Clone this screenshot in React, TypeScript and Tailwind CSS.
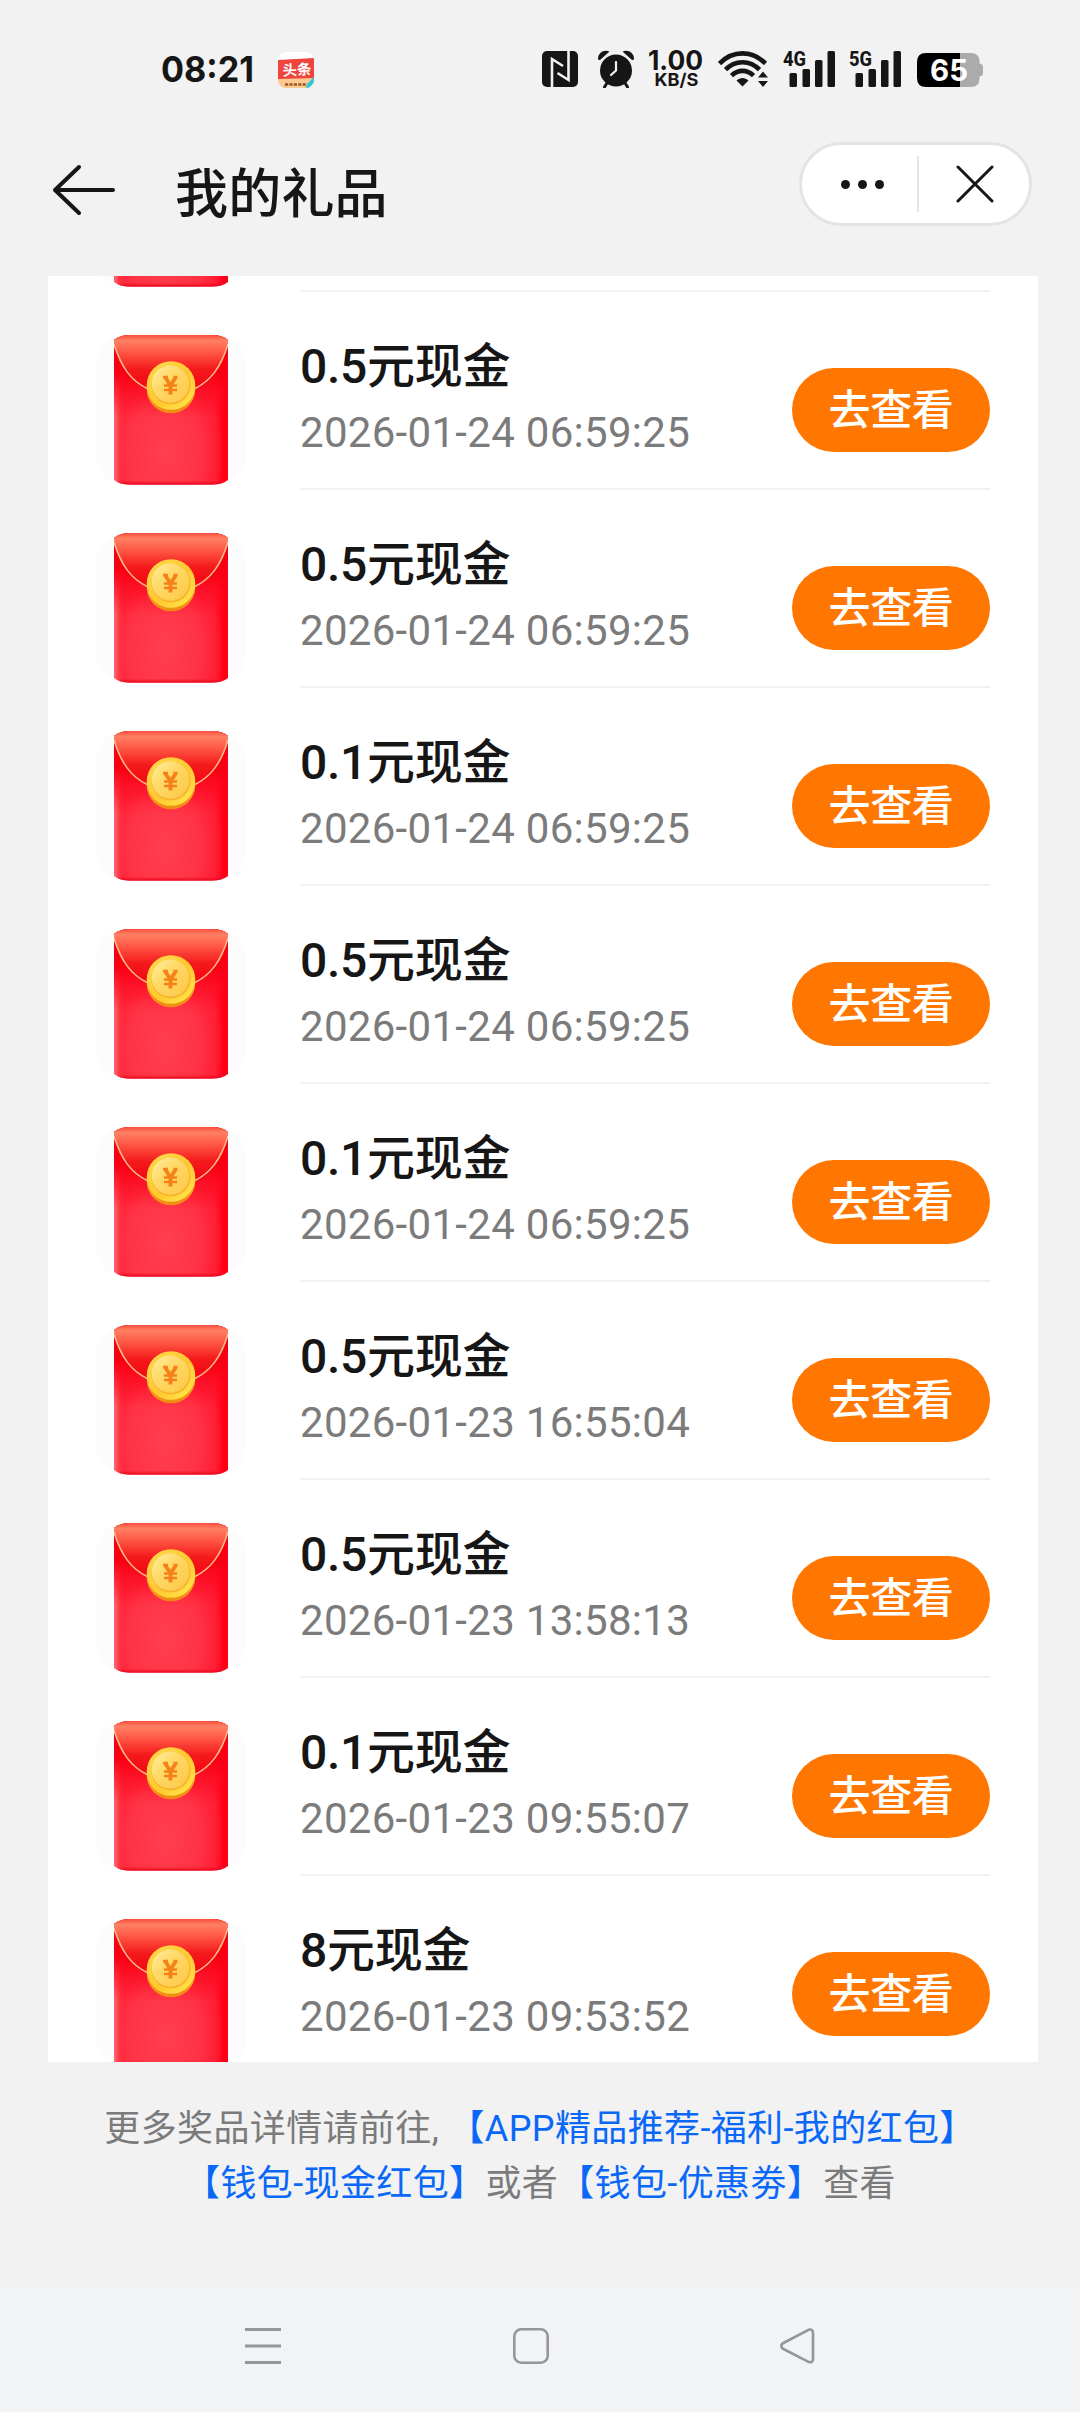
type Gift = {
  title: string;
  time: string;
};

const gifts: Gift[] = [
  { title: "0.5元现金", time: "2026-01-24 06:59:25" },
  { title: "0.5元现金", time: "2026-01-24 06:59:25" },
  { title: "0.1元现金", time: "2026-01-24 06:59:25" },
  { title: "0.5元现金", time: "2026-01-24 06:59:25" },
  { title: "0.1元现金", time: "2026-01-24 06:59:25" },
  { title: "0.5元现金", time: "2026-01-23 16:55:04" },
  { title: "0.5元现金", time: "2026-01-23 13:58:13" },
  { title: "0.1元现金", time: "2026-01-23 09:55:07" },
  { title: "8元现金", time: "2026-01-23 09:53:52" },
];

function ToutiaoIcon() {
  return (
    <svg className="ml-[25px] mt-[52px] h-9 w-9" viewBox="0 0 36 36">
      <defs>
        <clipPath id="app-clip">
          <rect width="36" height="36" rx="8" />
        </clipPath>
      </defs>
      <g clipPath="url(#app-clip)">
        <rect width="36" height="36" fill="#fff" />
        <path d="M0 8 36 6V28H0Z" fill="#f0443e" />
        <path d="M0 27 36 26V36H0Z" fill="#fdc98f" />
        <path d="M29 32 36 25V31L31 36H28Z" fill="#2fc8d8" />
      </g>
      <text
        x="4.5"
        y="23"
        fontSize="14.5"
        fontWeight="700"
        fill="#fff"
        transform="rotate(-3 18 18)"
        className="font-['Noto_Sans_CJK_SC',sans-serif]"
      >
        头条
      </text>
      <path d="M7 32.5h21" stroke="#9c5a2c" strokeWidth="2.6" strokeDasharray="3.2 1.2" />
    </svg>
  );
}

function NfcIcon() {
  return (
    <svg className="h-9 w-9" viewBox="0 0 36 36">
      <rect width="36" height="36" rx="5" fill="#161616" />
      <g fill="none" stroke="#f2f2f2" strokeWidth="2.6">
        <path d="M10 36V8L21 15" />
        <path d="M26.500 0V29L15.500 22" />
      </g>
    </svg>
  );
}

function AlarmIcon() {
  return (
    <svg className="h-[38px] w-9" viewBox="0 0 36 38">
      <g fill="#161616">
        <circle cx="18" cy="20.500" r="16" />
        <path d="M0 8.500C0 3 6 -1 11.500 1.500L2 10C.6 10 0 9.500 0 8.500Z" />
        <path d="M36 8.500C36 3 30 -1 24.500 1.500L34 10C35.400 10 36 9.500 36 8.500Z" />
      </g>
      <path d="M9 33 6.500 37M27 33l2.500 4" stroke="#161616" strokeWidth="3" strokeLinecap="round" />
      <path d="M18 12v8.500l-5 4.500" fill="none" stroke="#f2f2f2" strokeWidth="2.200" strokeLinecap="round" />
    </svg>
  );
}

function NetSpeed() {
  return (
    <svg className="h-[38px] w-[54px] overflow-visible" viewBox="0 0 54 38" fill="#161616">
      <text x="-1" y="20" fontSize="26.5" fontWeight="700" textLength="55" lengthAdjust="spacingAndGlyphs" className="font-['Inter',sans-serif]">
        1.00
      </text>
      <text x="5.500" y="36" fontSize="17.500" fontWeight="700" textLength="44" lengthAdjust="spacingAndGlyphs" className="font-['Inter',sans-serif]">
        KB/S
      </text>
    </svg>
  );
}

function WifiIcon() {
  return (
    <svg className="h-9 w-[51px]" viewBox="0 0 51 36">
      <g fill="none" stroke="#161616" strokeWidth="4.6">
        <path d="M1.500 12.500C15-1 34-1 47.500 12.500" />
        <path d="M7.500 18.700C17 8.700 32 8.700 41.500 18.700" />
        <path d="M13.500 24.700C20 18.200 29 18.200 35.500 24.700" />
      </g>
      <path d="M18.500 29.500C22 26 27 26 30.500 29.500L24.500 35.500Z" fill="#161616" />
      <path d="M40 26.500 45 20.500 50 26.500ZM40 30 45 36 50 30Z" fill="#161616" />
    </svg>
  );
}

function SignalIcon({ label }: { label: string }) {
  return (
    <svg className="h-[38px] w-[52px] overflow-visible" viewBox="0 0 52 38" fill="#161616">
      <text x="0" y="16" fontSize="21" fontWeight="800" textLength="23" lengthAdjust="spacingAndGlyphs" className="font-['Roboto',sans-serif]">
        {label}
      </text>
      <rect x="6.500" y="23" width="7.500" height="14" rx="1.500" />
      <rect x="19.500" y="19" width="7.500" height="18" rx="1.500" />
      <rect x="32" y="10" width="7.500" height="27" rx="1.500" />
      <rect x="44.500" y="1" width="7.500" height="36" rx="1.500" />
    </svg>
  );
}

function BatteryIcon() {
  return (
    <svg className="h-[34px] w-[66px] overflow-visible" viewBox="0 0 66 34">
      <path d="M43 0H54Q62 0 62.500 8V10.500Q66 11 66 14V20Q66 23 62.500 23.500V26Q62 34 54 34H43Z" fill="#ababab" />
      <path d="M43 0H9Q0 0 0 9V25Q0 34 9 34H43Z" fill="#000" />
      <text x="13" y="28" fontSize="30" fontWeight="700" fill="#fff" textLength="38" lengthAdjust="spacingAndGlyphs" className="font-['Inter',sans-serif]">
        65
      </text>
    </svg>
  );
}

function StatusBar() {
  return (
    <div className="flex h-[130px] items-start pl-[161px]">
      <svg className="mt-[50px] h-9 w-[92px] overflow-visible" viewBox="0 0 92 36" fill="#161616">
        <text x="0" y="31.500" fontSize="36" fontWeight="700" textLength="93" lengthAdjust="spacingAndGlyphs" className="font-['Inter',sans-serif]">
          08:21
        </text>
      </svg>
      <ToutiaoIcon />
      <div className="ml-[228px] mt-[50px] flex items-start">
        <div className="mt-px">
          <NfcIcon />
        </div>
        <div className="ml-5">
          <AlarmIcon />
        </div>
        <div className="ml-[15px]">
          <NetSpeed />
        </div>
        <div className="ml-[15px] mt-px">
          <WifiIcon />
        </div>
        <div className="ml-[14px]">
          <SignalIcon label="4G" />
        </div>
        <div className="ml-[14px]">
          <SignalIcon label="5G" />
        </div>
        <div className="ml-4 mt-[3px]">
          <BatteryIcon />
        </div>
      </div>
    </div>
  );
}

function TopBar() {
  return (
    <header className="flex h-[146px] items-start pl-[52px]">
      <button type="button" aria-label="返回" className="mt-[34px]">
        <svg className="h-[52px] w-[64px]" viewBox="0 0 64 52" fill="none" stroke="#161616" strokeWidth="4" strokeLinecap="round" strokeLinejoin="round">
          <path d="M61 26H3M27 3 3 26 27 49" />
        </svg>
      </button>
      <h1 className="ml-[59px] mt-[25px] text-[53px] font-medium leading-[80px] tracking-[0.2px] text-[#161616]">我的礼品</h1>
      <div className="ml-auto mr-12 mt-3 flex h-[84px] w-[233px] items-center rounded-full border-[3px] border-[#e4e4e4] bg-white">
        <button type="button" aria-label="更多" className="flex flex-1 items-center justify-center gap-2 pl-1.5">
          <span className="h-[9px] w-[9px] rounded-full bg-[#161616]" />
          <span className="h-[9px] w-[9px] rounded-full bg-[#161616]" />
          <span className="h-[9px] w-[9px] rounded-full bg-[#161616]" />
        </button>
        <span className="h-14 w-[2px] bg-[#e4e4e4]" />
        <button type="button" aria-label="关闭" className="flex flex-1 items-center justify-center pl-0.5">
          <svg className="h-[38px] w-[38px]" viewBox="0 0 38 38" stroke="#161616" strokeWidth="3" strokeLinecap="round">
            <path d="M2 2 36 36M36 2 2 36" />
          </svg>
        </button>
      </div>
    </header>
  );
}

function EnvelopeDefs() {
  return (
    <svg className="absolute h-0 w-0" aria-hidden="true">
      <defs>
        <linearGradient id="body-side" x1="0" x2="1" y1="0" y2="0">
          <stop offset="0" stopColor="#ff6670" />
          <stop offset=".08" stopColor="#ff2236" />
          <stop offset=".4" stopColor="#ff2a40" />
          <stop offset=".88" stopColor="#ff1c34" />
          <stop offset=".96" stopColor="#ff0018" />
          <stop offset="1" stopColor="#f80010" />
        </linearGradient>
        <radialGradient id="body-glow" cx=".45" cy=".78" r=".6">
          <stop offset="0" stopColor="#ff404e" />
          <stop offset=".6" stopColor="#ff3648" stopOpacity=".8" />
          <stop offset="1" stopColor="#ff2038" stopOpacity="0" />
        </radialGradient>
        <linearGradient id="body-dark" x1="0" x2="0" y1="0" y2="1">
          <stop offset=".25" stopColor="#f80014" />
          <stop offset=".55" stopColor="#ff0a20" stopOpacity="0" />
          <stop offset=".97" stopColor="#ff0a20" stopOpacity="0" />
          <stop offset="1" stopColor="#d80018" />
        </linearGradient>
        <linearGradient id="flap" x1="0" x2="0" y1="0" y2="1">
          <stop offset="0" stopColor="#f8503c" />
          <stop offset=".1" stopColor="#ff8064" />
          <stop offset=".3" stopColor="#ff5844" />
          <stop offset=".6" stopColor="#f41a1c" />
          <stop offset="1" stopColor="#f40012" />
        </linearGradient>
        <linearGradient id="coin-edge" x1="0" x2="0" y1="0" y2="1">
          <stop offset="0" stopColor="#ffd23c" />
          <stop offset="1" stopColor="#f18a12" />
        </linearGradient>
        <linearGradient id="coin-rim" x1="0" x2="1" y1="0" y2="1">
          <stop offset="0" stopColor="#ffd94e" />
          <stop offset=".55" stopColor="#ffc92e" />
          <stop offset="1" stopColor="#ffec50" />
        </linearGradient>
        <linearGradient id="coin-face" x1="0" x2="1" y1="0" y2="1">
          <stop offset="0" stopColor="#fff0a0" />
          <stop offset=".4" stopColor="#ffd968" />
          <stop offset="1" stopColor="#ffc644" />
        </linearGradient>
        <clipPath id="envelope-clip">
          <path d="M0 5Q6 0 16 0H98Q108 0 114 5V145Q108 149.500 98 149.500H16Q6 149.500 0 145Z" />
        </clipPath>
      </defs>
    </svg>
  );
}

function RedEnvelope() {
  return (
    <div className="flex h-[150px] w-[150px] shrink-0 justify-center rounded-[30px] bg-[#fcfcfc]">
      <svg className="h-[150px] w-[114px]" viewBox="0 0 114 150">
        <g clipPath="url(#envelope-clip)">
          <rect width="114" height="150" fill="url(#body-side)" />
          <rect x="4" width="104" height="150" fill="url(#body-glow)" />
          <rect width="114" height="150" fill="url(#body-dark)" />
          <path d="M0 0H114V10C108 32 96 46 80 52Q57 62 34 52C18 46 6 30 0 10Z" fill="url(#flap)" />
          <path d="M0 9C7 32 17 46 34 54M114 9C107 32 97 46 80 54" fill="none" stroke="#ffb880" strokeWidth="1.600" />
        </g>
        <circle cx="57" cy="54" r="24.300" fill="url(#coin-edge)" />
        <circle cx="57" cy="50.500" r="24.300" fill="url(#coin-rim)" />
        <circle cx="57" cy="50" r="19.500" fill="#f6b32c" />
        <circle cx="56.500" cy="49" r="18.800" fill="url(#coin-face)" />
        <path d="M51 42 56.500 50.500 62 42M56.500 50.500V59.500" fill="none" stroke="#f58218" strokeWidth="3.800" />
        <path d="M49 42H54M59.500 42H63.500M50 50.500H63M50 55H63" fill="none" stroke="#f58218" strokeWidth="2.400" />
      </svg>
    </div>
  );
}

function GiftRow({ gift }: { gift: Gift }) {
  return (
    <li className="flex h-[198px] shrink-0 pl-12 pr-12">
      <div className="mt-[43px]">
        <RedEnvelope />
      </div>
      <div className="ml-[54px] flex flex-1 items-start border-b-2 border-[#f2f2f2]">
        <div className="flex-1 pt-[43px]">
          <p className="text-[48px] font-medium leading-[64px] tracking-[-0.3px] text-[#161616]">{gift.title}</p>
          <p className="mt-[9px] text-[42px] leading-[50px] tracking-[0.3px] text-[#7b7b7b]">{gift.time}</p>
        </div>
        <button
          type="button"
          className="mt-[76px] h-[84px] w-[198px] rounded-full bg-[#ff7700] pt-px text-[42px] font-medium leading-[83px] tracking-[-0.3px] text-white"
        >
          去查看
        </button>
      </div>
    </li>
  );
}

function GiftList() {
  return (
    <main className="ml-12 mr-[42px] flex h-[1786px] flex-col overflow-hidden bg-white">
      {/* tail end of the row scrolled above the fold */}
      <div className="flex h-4 shrink-0 items-end overflow-hidden px-12">
        <div className="mb-[5px]">
          <RedEnvelope />
        </div>
        <div className="ml-[54px] h-[2px] flex-1 bg-[#f2f2f2]" />
      </div>
      <ul className="flex flex-col">
        {gifts.map((gift, index) => (
          <GiftRow key={index} gift={gift} />
        ))}
      </ul>
    </main>
  );
}

function FooterNote() {
  return (
    <footer className="h-[226px] pt-10 text-center text-[36px] font-normal leading-[55px] tracking-[0.38px] text-[#7b7b7b]">
      <p>
        更多奖品详情请前往, <span className="text-[#0a68f8]">【APP精品推荐-福利-我的红包】</span>
      </p>
      <p>
        <span className="text-[#0a68f8]">【钱包-现金红包】</span>或者<span className="text-[#0a68f8]">【钱包-优惠劵】</span>查看
      </p>
    </footer>
  );
}

function SystemNav() {
  return (
    <nav className="flex flex-1 items-start bg-[#f1f3f5] pl-[245px] pt-10">
      <svg className="h-9 w-9" viewBox="0 0 36 36" stroke="#959699" strokeWidth="3">
        <path d="M0 1.500H36M0 18H36M0 34.500H36" />
      </svg>
      <svg className="ml-[232px] h-9 w-9" viewBox="0 0 36 36" fill="none" stroke="#959699" strokeWidth="2.600">
        <rect x="1.300" y="1.300" width="33.400" height="33.400" rx="7" />
      </svg>
      <svg className="ml-[231px] h-9 w-[35px]" viewBox="0 0 35 36" fill="none" stroke="#959699" strokeWidth="2.600" strokeLinejoin="round">
        <path d="M2.500 15.500 28.500 1.800Q33 .5 33 5V31Q33 35.500 28.500 33.800L2.500 20.500Q.2 18 2.500 15.500Z" />
      </svg>
    </nav>
  );
}

export default function App() {
  return (
    <div className="flex h-[2412px] w-[1080px] flex-col overflow-hidden bg-[#f2f2f2] font-['Roboto','Noto_Sans_CJK_SC',sans-serif]">
      <EnvelopeDefs />
      <StatusBar />
      <TopBar />
      <GiftList />
      <FooterNote />
      <SystemNav />
    </div>
  );
}
